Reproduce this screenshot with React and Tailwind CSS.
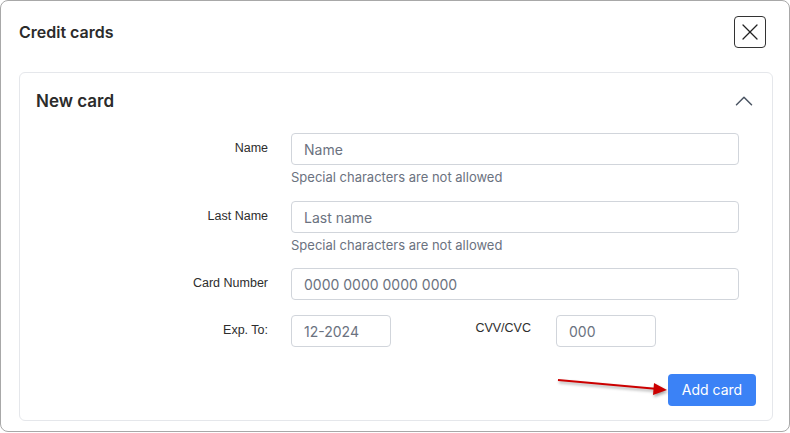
import { ChevronUp, X } from 'lucide-react';

const inputCls =
  'h-8 rounded border border-[#d1d5db] bg-white px-3 text-sm text-[#374151] placeholder:text-[#6b7280] outline-none';

const labelCls =
  "shrink-0 text-right text-[12.5px] leading-4 text-[#2d2d2d] font-['Liberation_Sans',Arial,sans-serif]";

function Label({ children }) {
  return <div className={`${labelCls} w-[232px] pt-[7px]`}>{children}</div>;
}

export default function App() {
  return (
    <div className="relative h-[433px] w-[790px] bg-white font-['Inter',sans-serif]">
      <div className="flex h-[432px] flex-col rounded-lg border border-[#a8a8a8] bg-white">
        {/* header */}
        <div className="flex items-center justify-between pl-[18px] pr-[23px] pt-[15px]">
          <h2 className="text-base font-semibold text-[#2b2b2b]">Credit cards</h2>
          <button className="flex h-8 w-8 items-center justify-center rounded border border-[#333] text-[#222]">
            <X size={28} strokeWidth={1.1} />
          </button>
        </div>

        {/* card */}
        <div className="mb-[10px] ml-[18px] mr-[16px] mt-[24px] flex flex-1 flex-col rounded-md border border-[#e5e7eb]">
          <div className="flex items-center justify-between pl-4 pr-[13px] pt-4">
            <h3 className="text-[17px] font-semibold leading-6 text-[#2b2b2b]">New card</h3>
            <ChevronUp size={30} strokeWidth={1.2} className="-my-1 text-[#4b5563]" />
          </div>

          <div className="mt-[20px] flex flex-col pl-4 pr-[33px]">
            <div className="mb-[15px] flex gap-[23px]">
              <Label>Name</Label>
              <div className="flex flex-1 flex-col">
                <input className={inputCls} placeholder="Name" />
                <p className="mt-[3px] text-[13px] leading-[18px] text-[#6b7280]">Special characters are not allowed</p>
              </div>
            </div>

            <div className="mb-[14px] flex gap-[23px]">
              <Label>Last Name</Label>
              <div className="flex flex-1 flex-col">
                <input className={inputCls} placeholder="Last name" />
                <p className="mt-[3px] text-[13px] leading-[18px] text-[#6b7280]">Special characters are not allowed</p>
              </div>
            </div>

            <div className="mb-[15px] flex gap-[23px]">
              <Label>Card Number</Label>
              <input className={`${inputCls} flex-1`} placeholder="0000 0000 0000 0000" />
            </div>

            <div className="flex">
              <div className={`${labelCls} w-[232px] pt-[7px]`}>Exp. To:</div>
              <input className={`${inputCls} ml-[23px] w-[100px]`} placeholder="12-2024" />
              <div className={`${labelCls} w-[140px] pt-[5px]`}>CVV/CVC</div>
              <input className={`${inputCls} ml-[25px] w-[100px]`} placeholder="000" />
            </div>
          </div>

          <div className="mt-[27px] flex justify-end pr-[16px]">
            <button className="h-8 w-[88px] rounded bg-[#3b82f6] text-sm text-white">Add card</button>
          </div>
        </div>
      </div>

      {/* annotation arrow */}
      <svg
        className="absolute left-[554px] top-[374px]"
        width="118"
        height="24"
        viewBox="0 0 118 24"
        style={{ filter: 'drop-shadow(1px 2px 1.5px rgba(0,0,0,0.35))' }}
      >
        <line x1="4" y1="6" x2="104" y2="15" stroke="#cc0000" strokeWidth="2" />
        <polygon points="100,9 113,16 99,21" fill="#cc0000" />
      </svg>
    </div>
  );
}
